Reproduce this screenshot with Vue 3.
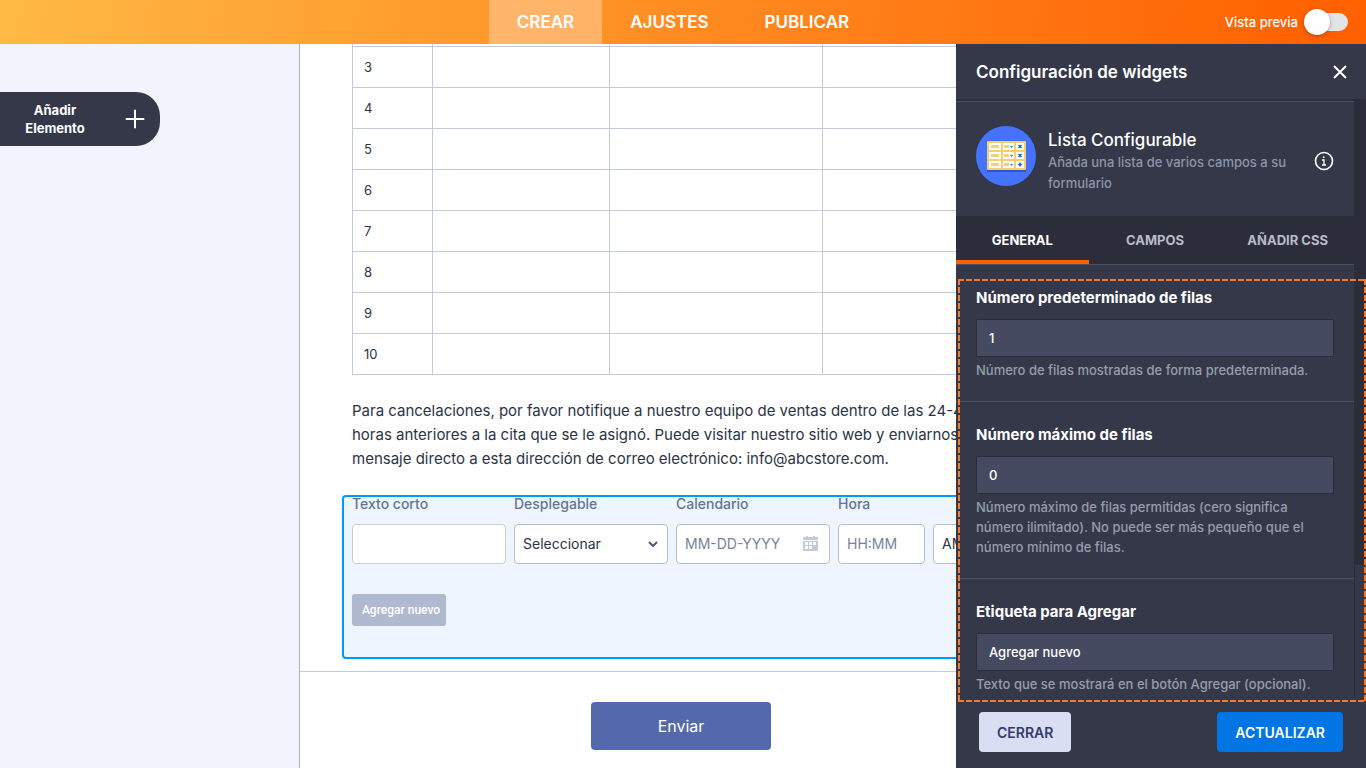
<template>
  <div class="builder">
    <header class="topbar">
      <nav class="steps">
        <a v-for="step in steps" :key="step" href="#" class="step" :class="{ active: step == activeStep }" @click.prevent="activeStep = step">{{ step }}</a>
      </nav>
      <label class="preview">
        <span>Vista previa</span>
        <input type="checkbox" class="switch" v-model="preview" />
      </label>
    </header>

    <main class="workspace">
      <aside class="sidebar">
        <button class="add-element">
          <span class="add-text">Añadir Elemento</span>
          <svg width="20" height="20" viewBox="0 0 20 20" fill="none" stroke="#fff" stroke-width="2" stroke-linecap="round">
            <path d="M10 1.5v17M1.5 10h17" />
          </svg>
        </button>
      </aside>

      <section class="form">
        <div class="form-body">
          <table class="grid">
            <colgroup>
              <col class="col-num" />
              <col class="col-a" />
              <col class="col-b" />
              <col />
            </colgroup>
            <tbody>
              <tr class="cut"><td></td><td></td><td></td><td></td></tr>
              <tr v-for="row in rows" :key="row">
                <td>{{ row }}</td>
                <td></td>
                <td></td>
                <td></td>
              </tr>
            </tbody>
          </table>
          <p class="notice">Para cancelaciones, por favor notifique a nuestro equipo de ventas dentro de las 24-48 horas anteriores a la cita que se le asignó. Puede visitar nuestro sitio web y enviarnos un mensaje directo a esta dirección de correo electrónico: info@abcstore.com.</p>
          <div class="widget">
            <div class="fields">
              <div class="field">
                <label for="short">Texto corto</label>
                <input id="short" type="text" class="plain" />
              </div>
              <div class="field">
                <label for="drop">Desplegable</label>
                <div class="select-wrap">
                  <select id="drop"><option>Seleccionar</option></select>
                  <svg class="chevron" width="10" height="6" viewBox="0 0 10 6" fill="none" stroke="#4f5872" stroke-width="2">
                    <path d="M1 1l4 4 4-4" />
                  </svg>
                </div>
              </div>
              <div class="field">
                <label for="date">Calendario</label>
                <div class="select-wrap">
                  <input id="date" type="text" placeholder="MM-DD-YYYY" />
                  <svg class="calendar" width="15" height="15" viewBox="0 0 15 15" fill="#c3cad8">
                    <path d="M0 1h3V0h2v1h5V0h2v1h3v3H0z" />
                    <path fill-rule="evenodd" d="M0 5h15v10H0zM2 6v3h3V6zM6 6v3h3V6zM10 6v3h3V6zM2 10v3h3v-3zM6 10v3h3v-3z" />
                  </svg>
                </div>
              </div>
              <div class="field hour">
                <label for="hour">Hora</label>
                <input id="hour" type="text" placeholder="HH:MM" />
              </div>
              <div class="field ampm">
                <select aria-label="AM o PM"><option>AM</option></select>
              </div>
            </div>
            <button class="add-row">Agregar nuevo</button>
          </div>
        </div>
        <div class="submit-row">
          <button class="submit">Enviar</button>
        </div>
      </section>

      <aside class="panel">
        <div class="panel-title">
          <h2>Configuración de widgets</h2>
          <button class="close" aria-label="Cerrar panel">
            <svg width="14" height="14" viewBox="0 0 14 14" fill="none" stroke="#fff" stroke-width="2">
              <path d="M1 1l12 12M13 1L1 13" />
            </svg>
          </button>
        </div>
        <div class="panel-scroll">
          <div class="panel-content">
            <div class="widget-info">
              <svg class="logo" width="60" height="60" viewBox="0 0 60 60">
                <circle cx="30" cy="30" r="30" fill="#4573ff" />
                <rect x="11" y="17" width="39" height="29" fill="#3155c4" />
                <rect x="11" y="15" width="39" height="29" rx="1" fill="#f7ce6b" />
                <g v-for="y in [17, 26, 35]" :key="y">
                  <rect x="13" :y="y" width="12" height="7" fill="#fff" />
                  <rect x="27" :y="y" width="11" height="7" fill="#fff" />
                  <rect x="40" :y="y" width="8" height="7" fill="#fff" />
                  <rect x="15" :y="y + 2" width="8" height="3" fill="#f4d27d" />
                  <rect x="28" :y="y + 2" width="5" height="3" fill="#f4d27d" />
                  <path :d="`M34 ${y + 3}h3l-1.5 2z`" fill="#1682c9" />
                  <path v-if="y < 35" :d="`M42.5 ${y + 2}l3 3m0-3l-3 3`" stroke="#1670bd" stroke-width="1.5" />
                  <path v-else d="M42 38.5h4M44 36.5v4" stroke="#1670bd" stroke-width="1.5" />
                </g>
              </svg>
              <div class="info-text">
                <h3>Lista Configurable</h3>
                <p>Añada una lista de varios campos a su formulario</p>
              </div>
              <svg class="info-icon" width="20" height="20" viewBox="0 0 20 20" fill="none" stroke="#fff">
                <circle cx="10" cy="10" r="8.5" stroke-width="1.6" />
                <path d="M8 9h2v5M8 14h4" stroke-width="1.3" />
                <circle cx="9.7" cy="6.2" r=".9" fill="#fff" stroke="none" />
              </svg>
            </div>
            <div class="tabs">
              <button v-for="tab in tabs" :key="tab" class="tab" :class="{ active: tab == activeTab }" @click="activeTab = tab">{{ tab }}</button>
            </div>
            <div v-for="item in settings" :key="item.id" class="setting">
              <label :for="item.id">{{ item.label }}</label>
              <input :id="item.id" type="text" v-model="item.value" />
              <p>{{ item.help }}</p>
            </div>
          </div>
          <div class="track"><div class="thumb"></div></div>
        </div>
        <div class="panel-actions">
          <button class="btn-close">CERRAR</button>
          <button class="btn-update">ACTUALIZAR</button>
        </div>
        <div class="highlight"></div>
      </aside>
    </main>
  </div>
</template>

<script setup>
import { ref } from "vue"

const steps = ["CREAR", "AJUSTES", "PUBLICAR"];
const activeStep = ref("CREAR");
const preview = ref(false);
const rows = [3, 4, 5, 6, 7, 8, 9, 10];
const tabs = ["GENERAL", "CAMPOS", "AÑADIR CSS"];
const activeTab = ref("GENERAL");
const settings = ref([
  { id: "rows-default", label: "Número predeterminado de filas", value: "1", help: "Número de filas mostradas de forma predeterminada." },
  { id: "rows-max", label: "Número máximo de filas", value: "0", help: "Número máximo de filas permitidas (cero significa número ilimitado). No puede ser más pequeño que el número mínimo de filas." },
  { id: "add-label", label: "Etiqueta para Agregar", value: "Agregar nuevo", help: "Texto que se mostrará en el botón Agregar (opcional)." }
]);
</script>

<style>
body {
  margin: 0;
}
</style>

<style scoped>
* {
  box-sizing: border-box;
}
h2, h3, p {
  margin: 0;
}
button, input, select {
  font: inherit;
  margin: 0;
}
button {
  border: 0;
  padding: 0;
  cursor: pointer;
}
.builder {
  height: 100vh;
  display: flex;
  flex-direction: column;
  overflow: hidden;
  font-family: Inter, "Liberation Sans", sans-serif;
  background: #f3f3fe;
}
.topbar {
  flex: none;
  height: 44px;
  display: grid;
  grid-template-columns: 1fr auto 1fr;
  background: linear-gradient(97deg, #ffb944, #ff6100 97%);
  color: #fff;
}
.steps {
  grid-column: 2;
  display: flex;
}
.step {
  padding: 0 28px;
  font-size: 17px;
  line-height: 44px;
  font-weight: 600;
  color: #fff;
  text-decoration: none;
}
.step.active {
  background: rgba(255, 255, 255, 0.3);
}
.preview {
  justify-self: end;
  display: flex;
  align-items: center;
  gap: 8px;
  padding-right: 18px;
  font-size: 13px;
  font-weight: 500;
}
.switch {
  appearance: none;
  position: relative;
  width: 42px;
  height: 18px;
  border-radius: 9px;
  background: #e3e4ea;
}
.switch::before {
  content: "";
  position: absolute;
  left: -2px;
  top: -4px;
  width: 26px;
  height: 26px;
  border-radius: 50%;
  background: #fff;
  box-shadow: 0 1px 4px rgba(0, 0, 0, 0.3);
}
.workspace {
  position: relative;
  flex: 1;
  min-height: 0;
  display: flex;
}
.sidebar {
  flex: 0 0 300px;
  padding-top: 48px;
  border-right: 1px solid #a3b4ca;
}
.add-element {
  width: 160px;
  height: 54px;
  padding: 0 15px 0 20px;
  display: flex;
  align-items: center;
  justify-content: space-between;
  border-radius: 0 24px 24px 0;
  background: #343849;
  color: #fff;
}
.add-text {
  width: 70px;
  font-size: 13px;
  line-height: 18px;
  font-weight: 700;
}
.form {
  flex: 0 1 762px;
  min-width: 0;
  background: #fff;
}
.form-body {
  padding: 0 42px 12px;
  border-bottom: 1px solid #c3cad8;
}
.grid {
  width: calc(100% - 20px);
  margin-left: 10px;
  border-collapse: collapse;
  table-layout: fixed;
}
.col-num {
  width: 80px;
}
.col-a {
  width: 177px;
}
.col-b {
  width: 213px;
}
.grid td {
  height: 41px;
  padding: 0 11px;
  border: 1px solid #c3cad8;
  font-size: 13px;
  line-height: 16px;
  color: #2c3345;
}
.grid .cut td {
  height: 2px;
  padding: 0;
  border-top: 0;
}
.notice {
  margin: 24px 10px;
  font-size: 15px;
  line-height: 24px;
  color: #2c3345;
}
.widget {
  height: 164px;
  padding: 0 8px;
  border: 2px solid #0099ff;
  border-radius: 4px;
  background: #eef5ff;
}
.fields {
  display: flex;
  align-items: flex-end;
  gap: 8px;
  font-size: 14px;
}
.field {
  width: 154px;
}
.field.hour {
  width: 87px;
}
.field.ampm {
  width: 75px;
}
.field label {
  display: block;
  margin-bottom: 13px;
  line-height: 14px;
  font-weight: 500;
  color: #677490;
}
.field input,
.field select {
  appearance: none;
  display: block;
  width: 100%;
  height: 40px;
  padding: 0 8px;
  border: 1px solid #b8bdc9;
  border-radius: 4px;
  background: #fff;
  color: #2c3345;
}
.field .plain {
  border-color: #ccc;
}
.field input::placeholder {
  color: #78839a;
  opacity: 1;
}
.select-wrap {
  position: relative;
}
.chevron {
  position: absolute;
  right: 10px;
  top: 17px;
}
.calendar {
  position: absolute;
  right: 12px;
  top: 12px;
}
.add-row {
  margin-top: 30px;
  width: 94px;
  height: 32px;
  padding-left: 4px;
  border-radius: 3px;
  background: #afb9cf;
  color: #fff;
  font-family: Roboto, sans-serif;
  font-size: 12px;
  font-weight: 500;
}
.submit-row {
  padding-top: 30px;
  text-align: center;
}
.submit {
  width: 180px;
  height: 48px;
  border-radius: 4px;
  background: #5468ac;
  color: #fff;
  font-size: 16px;
}
.panel {
  position: absolute;
  top: 0;
  right: 0;
  bottom: 0;
  width: 410px;
  display: flex;
  flex-direction: column;
  background: #343849;
  color: #fff;
}
.panel-title {
  flex: none;
  height: 55px;
  padding: 0 19px 0 20px;
  display: flex;
  align-items: center;
  justify-content: space-between;
}
.panel-title h2 {
  font-size: 17px;
  font-weight: 600;
}
.close {
  display: flex;
  background: none;
}
.panel-scroll {
  flex: 1;
  min-height: 0;
  display: flex;
  background: #2b2d3a;
}
.panel-content {
  flex: 1;
  min-width: 0;
  padding-top: 2px;
  overflow: hidden;
}
.widget-info {
  height: 115px;
  padding: 4px 20px 0;
  display: flex;
  align-items: center;
  border-top: 1px solid #4c5160;
  background: #343849;
}
.logo {
  flex: none;
  margin: 0 12px 10px 0;
}
.info-text {
  flex: 1;
}
.info-text h3 {
  font-size: 17px;
  line-height: 24px;
  font-weight: 500;
}
.info-text p {
  font-size: 13px;
  line-height: 21px;
  font-weight: 500;
  color: #8d95a9;
}
.info-icon {
  flex: none;
}
.tabs {
  display: grid;
  grid-template-columns: repeat(3, 1fr);
}
.tab {
  height: 48px;
  padding-top: 4px;
  border-bottom: 4px solid transparent;
  background: #2b2d3a;
  color: #b8bbc8;
  font-size: 13px;
  font-weight: 700;
}
.tab.active {
  border-color: #ff6100;
  color: #fff;
}
.setting {
  padding: 24px 20px 21px;
  border-top: 1px solid #4c5160;
  background: #343849;
}
.setting label {
  display: block;
  margin-bottom: 12px;
  font-size: 15px;
  line-height: 18px;
  font-weight: 700;
}
.setting input {
  display: block;
  width: 100%;
  height: 38px;
  padding: 0 12px;
  border: 1px solid #2b2d3a;
  border-radius: 2px;
  background: #454a60;
  color: #fff;
  font-size: 13px;
  font-weight: 500;
}
.setting p {
  margin-top: 3px;
  font-size: 13px;
  line-height: 20px;
  font-weight: 500;
  color: #979dae;
}
.track {
  flex: none;
  width: 12px;
  display: flex;
  align-items: flex-end;
}
.thumb {
  width: 100%;
  height: 132px;
  background: #343849;
  border-left: 1px solid #2b2d3a;
}
.panel-actions {
  flex: none;
  height: 71px;
  padding: 15px 23px 16px;
  display: flex;
  justify-content: space-between;
}
.panel-actions button {
  padding: 0 18px;
  border-radius: 4px;
  font-size: 14px;
  font-weight: 600;
}
.panel-actions .btn-close {
  background: #dadef3;
  color: #343c6a;
}
.panel-actions .btn-update {
  background: #0075e3;
  color: #fff;
}
/* dashed frame: 6px dash, 2px gap on every side */
.highlight {
  --across: repeating-linear-gradient(90deg, #f77926 0 6px, transparent 6px 8px);
  --down: repeating-linear-gradient(180deg, #f77926 0 6px, transparent 6px 8px);
  position: absolute;
  top: 235px;
  left: 2px;
  right: 0;
  bottom: 66px;
  background:
    var(--across) top / 100% 2px no-repeat,
    var(--across) bottom / 100% 2px no-repeat,
    var(--down) left / 2px 100% no-repeat,
    var(--down) right / 2px 100% no-repeat;
  pointer-events: none;
}
</style>
